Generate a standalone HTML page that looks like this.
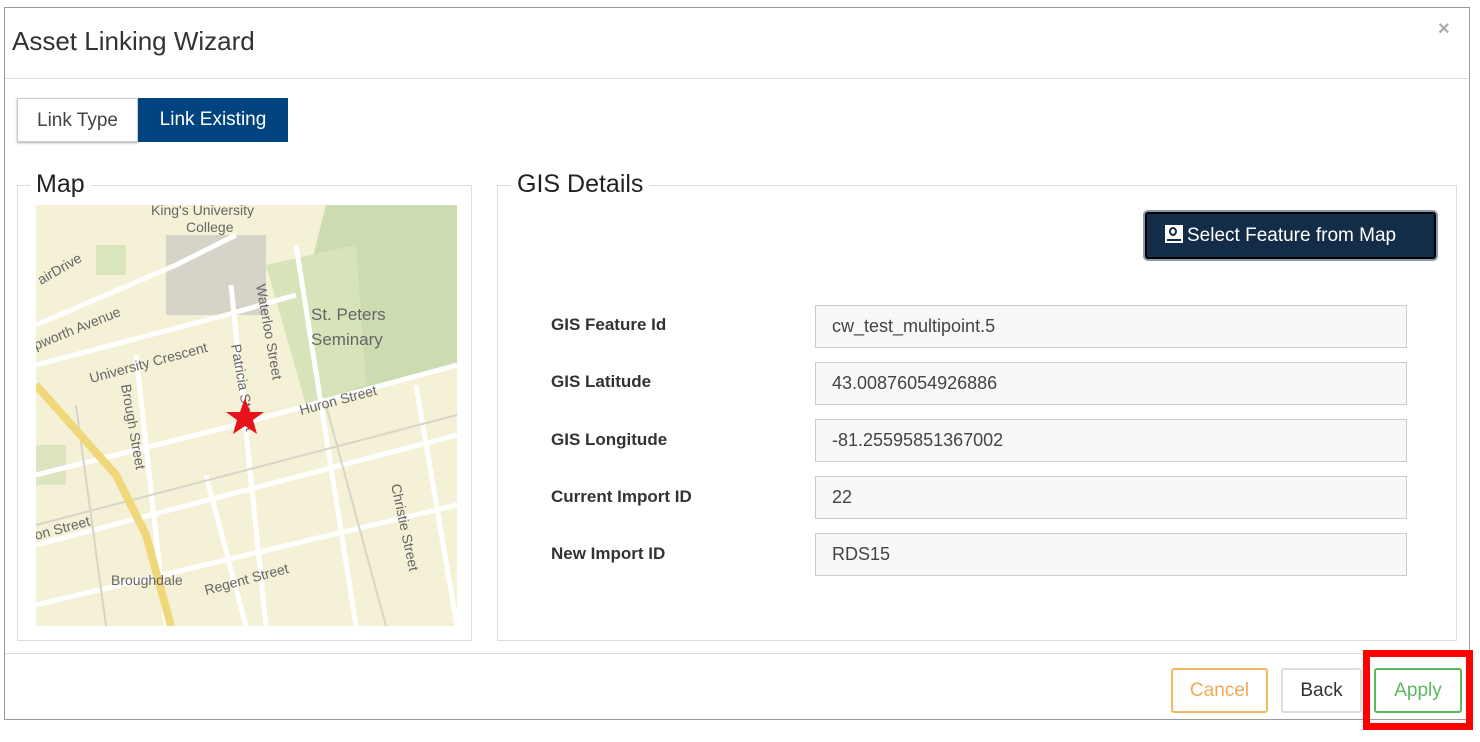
<!DOCTYPE html>
<html><head><style>
*{box-sizing:border-box;margin:0;padding:0}
body{width:1480px;height:742px;background:#fff;font-family:"Liberation Sans",sans-serif;position:relative;overflow:hidden;color:#333}
.abs{position:absolute}
.modal{left:4px;top:7px;width:1466px;height:713px;border:1px solid #9a9a9a;background:#fff}
.title{left:12px;top:26px;font-size:26px;color:#333}
.close{left:1438px;top:18px;font-size:20px;color:#aaa;font-weight:bold}
.hr1{left:5px;top:78px;width:1464px;height:1px;background:#ddd}
.tab{top:98px;height:44px;font-size:19px;line-height:44px;text-align:center}
.fs{border:1px solid #ddd}
.legend{font-size:25px;background:#fff;padding:0 6px;color:#222}
.lbl{left:551px;font-size:17px;font-weight:bold;color:#333}
.inp{left:815px;width:592px;height:43px;border:1px solid #ccc;background:#f8f8f8;font-size:18px;line-height:41px;padding-left:16px;color:#444}
.btn{top:668px;height:45px;border:2px solid;border-radius:3px;font-size:19px;line-height:41px;text-align:center;background:#fff}
</style></head><body>
<div class="abs modal"></div>
<div class="abs title">Asset Linking Wizard</div>
<div class="abs close">×</div>
<div class="abs hr1"></div>
<div class="abs tab" style="left:17px;width:121px;border:1px solid #ccc;box-shadow:0 1px 2px #aaa;color:#444">Link Type</div>
<div class="abs tab" style="left:138px;width:150px;background:#00437f;color:#fff">Link Existing</div>

<div class="abs fs" style="left:17px;top:185px;width:455px;height:456px"></div>
<div class="abs legend" style="left:30px;top:170px">Map</div>
<svg class="abs" style="left:36px;top:205px" width="421" height="421" viewBox="0 0 421 421">
<rect width="421" height="421" fill="#f4f1d6"/>
<path d="M290 0 L421 0 L421 160 L380 170 L300 190 L260 120 Z" fill="#cddbb0"/>
<path d="M230 60 L320 40 L330 180 L270 200 Z" fill="#d7e3b8"/>
<rect x="60" y="40" width="30" height="30" fill="#d9e5bb"/>
<rect x="0" y="240" width="30" height="40" fill="#dde5c0"/>
<rect x="130" y="30" width="100" height="80" fill="#d6d3c8"/>
<g stroke="#fff" stroke-width="5" fill="none">
<path d="M0 120 L140 60 L200 30"/>
<path d="M0 160 L190 110 L260 90"/>
<path d="M0 270 L200 220 L421 160"/>
<path d="M0 340 L421 230"/>
<path d="M0 400 L421 300"/>
<path d="M195 80 L230 421"/>
<path d="M260 40 L320 421"/>
<path d="M100 150 L130 421"/>
<path d="M380 180 L421 421"/>
<path d="M170 270 L210 421"/>
</g>
<g stroke="#d8d5c8" stroke-width="2" fill="none">
<path d="M0 320 L421 210"/><path d="M290 200 L350 421"/><path d="M40 200 L70 421"/>
</g>
<path d="M0 180 L80 270 L110 330 L135 421" stroke="#f0d77a" stroke-width="8" fill="none"/>
<g font-family="Liberation Sans" font-size="14" fill="#666">
<text x="115" y="10">King's University</text><text x="150" y="27">College</text>
<text x="275" y="115" font-size="17">St. Peters</text><text x="275" y="140" font-size="17">Seminary</text>
<text x="5" y="80" transform="rotate(-30 5 80)">airDrive</text>
<text x="0" y="145" transform="rotate(-22 0 145)">pworth Avenue</text>
<text x="55" y="178" transform="rotate(-15 55 178)">University Crescent</text>
<text x="265" y="210" transform="rotate(-15 265 210)">Huron Street</text>
<text x="170" y="390" transform="rotate(-15 170 390)">Regent Street</text>
<text x="0" y="335" transform="rotate(-15 0 335)">on Street</text>
<text x="75" y="380">Broughdale</text>
<text x="220" y="80" transform="rotate(80 220 80)">Waterloo Street</text>
<text x="195" y="140" transform="rotate(80 195 140)">Patricia Street</text>
<text x="85" y="180" transform="rotate(80 85 180)">Brough Street</text>
<text x="355" y="280" transform="rotate(78 355 280)">Christie Street</text>
</g>
<polygon points="209,193 214,207 228,207 217,215 221,229 209,221 197,229 201,215 190,207 204,207" fill="#e8121a"/>
</svg>

<div class="abs fs" style="left:497px;top:185px;width:960px;height:456px"></div>
<div class="abs legend" style="left:511px;top:170px">GIS Details</div>
<div class="abs" style="left:1145px;top:212px;width:291px;height:47px;background:#132c47;border:2px solid #000;box-shadow:0 0 0 2px #8a9bb0;border-radius:3px;color:#fff;font-size:19px;line-height:43px;padding-left:18px">
<span style="display:inline-block;width:18px;height:18px;background:#fff;vertical-align:-2px;margin-right:4px;position:relative"><span style="position:absolute;left:4px;top:2px;width:8px;height:9px;border:2px solid #132c47;border-radius:50%"></span><span style="position:absolute;left:2px;top:14px;width:14px;height:2px;background:#132c47"></span></span>Select Feature from Map</div>

<div class="abs lbl" style="top:315px">GIS Feature Id</div>
<div class="abs inp" style="top:305px">cw_test_multipoint.5</div>
<div class="abs lbl" style="top:372px">GIS Latitude</div>
<div class="abs inp" style="top:362px">43.00876054926886</div>
<div class="abs lbl" style="top:430px">GIS Longitude</div>
<div class="abs inp" style="top:419px">-81.25595851367002</div>
<div class="abs lbl" style="top:487px">Current Import ID</div>
<div class="abs inp" style="top:476px">22</div>
<div class="abs lbl" style="top:544px">New Import ID</div>
<div class="abs inp" style="top:533px">RDS15</div>

<div class="abs" style="left:5px;top:653px;width:1464px;height:1px;background:#ddd"></div>
<div class="abs btn" style="left:1171px;width:97px;border-color:#f5b75f;color:#f3a953">Cancel</div>
<div class="abs btn" style="left:1281px;width:81px;border-color:#ddd;color:#333">Back</div>
<div class="abs btn" style="left:1374px;width:88px;border-color:#5cb85c;color:#5cb85c">Apply</div>
<div class="abs" style="left:1363px;top:650px;width:110px;height:80px;border:7px solid #f00"></div>
</body></html>
